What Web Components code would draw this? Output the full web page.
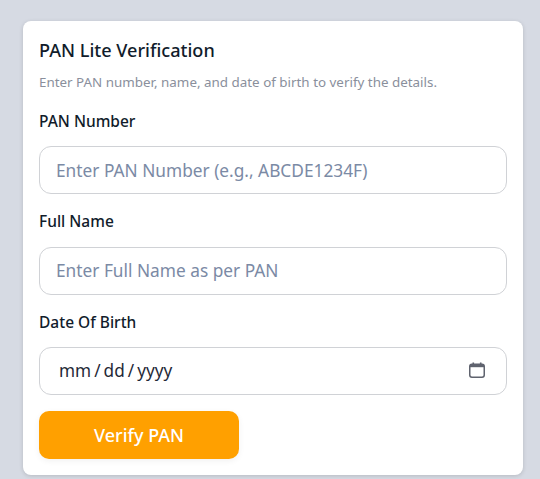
<!DOCTYPE html>
<html><head><meta charset="utf-8"><style>
html,body{margin:0;height:100%;overflow:hidden}
body{background:#d6dae3;font-family:"Noto Sans",sans-serif;padding:21px 17px 0 23px;box-sizing:border-box}
</style></head><body>
<pan-card></pan-card>
<script>
const FONT='"Noto Sans",sans-serif';
class PanField extends HTMLElement{
  connectedCallback(){
    if(this.shadowRoot)return;
    const r=this.attachShadow({mode:'open'});
    const type=this.getAttribute('type')||'text';
    const icon=type==='date'?`<svg viewBox="0 0 16 16" width="16" height="16" aria-hidden="true"><path d="M3.5 0.5h1.6v2H3.5zM10.9 0.5h1.6v2h-1.6z" fill="#5f636e"/><rect x="0.75" y="2.25" width="14.5" height="13" rx="2.2" fill="none" stroke="#5f636e" stroke-width="1.5"/><path d="M1 2.6h14v2.6H1z" fill="#5f636e"/></svg>`:'';
    r.innerHTML=`<style>
    :host{display:block}
    label{display:block;font:500 15.5px/18.5px ${FONT};color:#111c2b;margin-bottom:16px}
    .wrap{position:relative}
    input{display:block;box-sizing:border-box;width:100%;height:48px;border:1px solid #d0d2d6;border-radius:12px;background:#fff;padding:0 16px;font:400 17.3px ${FONT};color:#1f2937;outline:none}
    input::placeholder{color:#7b8aa5;opacity:1}
    input[type=date]{padding:0 18px 2px;font-size:17.2px}
    input::-webkit-calendar-picker-indicator{opacity:0}
    input::-webkit-datetime-edit-text{padding:0 2px}
    svg{position:absolute;right:22px;top:15px;display:block}
    </style><label>${this.getAttribute('label')}</label><div class="wrap"><input type="${type}" placeholder="${this.getAttribute('placeholder')||''}">${icon}</div>`;
  }
}
customElements.define('pan-field',PanField);
class PanButton extends HTMLElement{
  connectedCallback(){
    if(this.shadowRoot)return;
    this.attachShadow({mode:'open'}).innerHTML=`<style>
    :host{display:flex;align-items:center;justify-content:center;width:200px;height:48px;background:#ffa000;border-radius:10px;color:#fff;font:500 18px ${FONT};box-shadow:0 2px 6px rgba(0,0,0,.06);cursor:pointer}
    </style><slot></slot>`;
  }
}
customElements.define('pan-button',PanButton);
class PanCard extends HTMLElement{
  connectedCallback(){
    if(this.shadowRoot)return;
    this.attachShadow({mode:'open'}).innerHTML=`<style>
    :host{display:block;box-sizing:border-box;width:500px;height:454px;background:#fff;border-radius:8px;box-shadow:0 1px 4px rgba(0,0,0,.15);padding:15px 16px 16px}
    h1{margin:0;font:500 18.1px/28px ${FONT};color:#111c2b}
    p{margin:8px 0 0;font:400 13.4px/20px ${FONT};color:#8a8f9c}
    .stack{display:flex;flex-direction:column;gap:18px;margin-top:19.6px}
    pan-button{margin-top:-2px}
    </style><h1>PAN Lite Verification</h1><p>Enter PAN number, name, and date of birth to verify the details.</p>
    <div class="stack">
    <pan-field label="PAN Number" placeholder="Enter PAN Number (e.g., ABCDE1234F)"></pan-field>
    <pan-field label="Full Name" placeholder="Enter Full Name as per PAN"></pan-field>
    <pan-field label="Date Of Birth" type="date"></pan-field>
    <pan-button>Verify PAN</pan-button>
    </div>`;
  }
}
customElements.define('pan-card',PanCard);
</script>
</body></html>
